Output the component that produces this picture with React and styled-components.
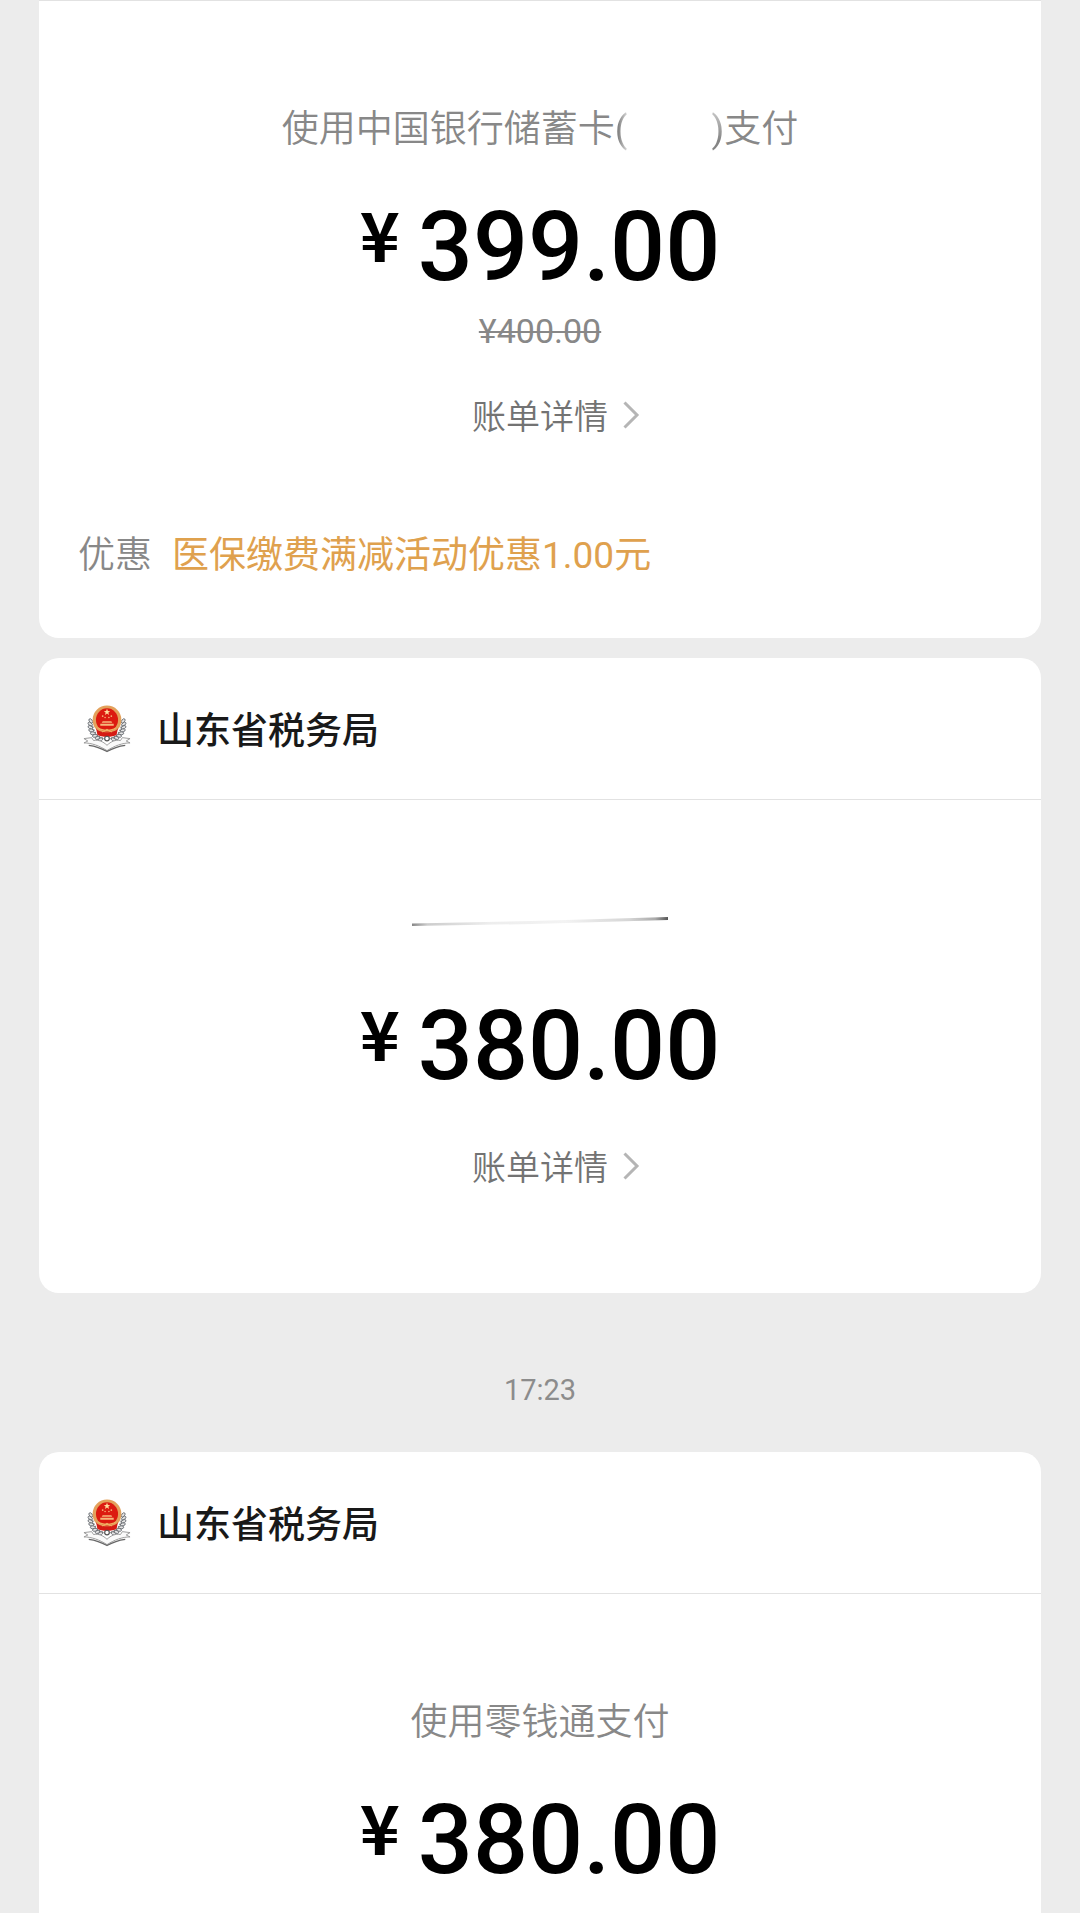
import React from "react";
import styled, { createGlobalStyle } from "styled-components";

const GRAINS = [0, 1, 2, 3, 4, 5, 6, 7];

function Emblem() {
  return (
    <svg width="48" height="48" viewBox="0 0 50 50" aria-hidden="true">
      {/* wheat ears */}
      {GRAINS.map((i) => {
        const deg = i * 12 - 16;
        const angle = (deg * Math.PI) / 180;
        const x = 17.5 * Math.cos(angle);
        const y = 21 + 16 * Math.sin(angle);
        return (
          <g key={i} fill="#e4e4e4" stroke="#666a70" strokeWidth=".9">
            <ellipse cx={25 + x} cy={y} rx="2.6" ry="1.5" transform={`rotate(${deg - 35} ${25 + x} ${y})`} />
            <ellipse cx={25 - x} cy={y} rx="2.6" ry="1.5" transform={`rotate(${35 - deg} ${25 - x} ${y})`} />
          </g>
        );
      })}
      <path d="M10 22c2 9 8 13 15 14 7-1 13-5 15-14" fill="none" stroke="#777" strokeWidth="1.2" strokeDasharray="2 1.2" />
      {/* red shield and gold ring */}
      <circle cx="25" cy="15.5" r="15" fill="#e3a15c" />
      <ellipse cx="25" cy="15.5" rx="11.5" ry="12" fill="#dc1a10" />
      <path d="M13.5 24c3 6 20 6 23 0l-1.500 7c-4 3-16 3-20 0z" fill="#d51b14" />
      <path d="M25 4l.9 2.300 2.400.1-1.900 1.500.7 2.400-2.100-1.400-2.100 1.400.7-2.400-1.900-1.500 2.400-.1z" fill="#ffdc9c" />
      <g fill="#f5b77b">
        <circle cx="20.500" cy="11.500" r=".9" />
        <circle cx="29.500" cy="11.500" r=".9" />
        <circle cx="23" cy="13" r=".8" />
        <circle cx="27" cy="13" r=".8" />
        <path d="M20.500 17h9l1 1.500h-11zM18 19.500h14v2H18z" />
      </g>
      <path d="M16 24c4 3 14 3 18 0M20 28l5-2.500 5 2.500" fill="none" stroke="#efae62" strokeWidth="1.500" />
      <circle cx="25" cy="35" r="2.400" fill="#fff" stroke="#555" strokeWidth="1.200" />
      {/* open book */}
      <path d="M1 35l8-1 2 3c5-1 10 1 14 5 4-4 9-6 14-5l2-3 8 1-4 2.500 4 2c-8 0-16 3-24 8-8-5-16-8-24-8l4-2z" fill="#fafafa" stroke="#909090" strokeWidth=".9" />
      <path d="M6 42c8 1 13 3 19 6.500 6-3.500 11-5.500 19-6.500" fill="none" stroke="#666" strokeWidth="1.300" />
    </svg>
  );
}

function CardTitle({ children }) {
  return (
    <CardHeader>
      <Emblem />
      <h2>{children}</h2>
    </CardHeader>
  );
}

function Price({ value }) {
  return (
    <Amount>
      <span className="sign">¥</span>
      <span className="value">{value}</span>
    </Amount>
  );
}

function BillLink() {
  return (
    <Details href="#bill">
      账单详情
      <svg width="18" height="30" viewBox="0 0 18 30" aria-hidden="true">
        <path d="M2.500 2.500L15 15 2.500 27.500" fill="none" stroke="#b5b5b5" strokeWidth="3" />
      </svg>
    </Details>
  );
}

function App() {
  return (
    <Page>
      <GlobalStyle />
      <Card $cut>
        <CardBody>
          <Method>
            使用中国银行储蓄卡<Paren $to="right">(</Paren>
            <Hidden />
            <Paren $to="top">)</Paren>支付
          </Method>
          <Price value="399.00" />
          <Original>¥400.00</Original>
          <BillLink />
        </CardBody>
        <Discount>
          <dt>优惠</dt>
          <dd>医保缴费满减活动优惠1.00元</dd>
        </Discount>
      </Card>
      <Card>
        <CardTitle>山东省税务局</CardTitle>
        <CardBody>
          <Method>
            <svg width="256" height="30" viewBox="0 0 256 30" aria-hidden="true">
              <defs>
                <linearGradient id="erased">
                  <stop offset="0" stopColor="#888" />
                  <stop offset=".06" stopColor="#ccc" />
                  <stop offset=".3" stopColor="#ededed" />
                  <stop offset=".6" stopColor="#f3f3f3" />
                  <stop offset=".85" stopColor="#d5d5d5" />
                  <stop offset=".95" stopColor="#aaa" />
                  <stop offset="1" stopColor="#555" />
                </linearGradient>
              </defs>
              <path d="M0 9.500L120 7 256 3v3L120 10 0 12z" fill="url(#erased)" />
            </svg>
          </Method>
          <Price value="380.00" />
          <BillLink />
        </CardBody>
      </Card>
      <Time>17:23</Time>
      <Card>
        <CardTitle>山东省税务局</CardTitle>
        <CardBody>
          <Method>使用零钱通支付</Method>
          <Price value="380.00" />
        </CardBody>
      </Card>
    </Page>
  );
}

const GlobalStyle = createGlobalStyle`
  * {
    box-sizing: border-box;
    margin: 0;
    padding: 0;
  }
  body {
    background: #ececec;
    font-family: Roboto, "Noto Sans CJK SC", sans-serif;
  }
`;

const Page = styled.main`
  height: 100vh;
  overflow: hidden;
  padding: 0 39px;
  background: #ececec;
`;

const Card = styled.section`
  background: #fff;
  border-radius: ${({ $cut }) => ($cut ? "0 0 20px 20px" : "20px")};
  & + & {
    margin-top: 20px;
  }
`;

const CardHeader = styled.header`
  display: flex;
  align-items: center;
  gap: 26px;
  height: 141px;
  padding: 0 44px;
  h2 {
    padding-top: 6px;
    color: #191919;
    font-size: 37px;
    font-weight: 500;
    line-height: 52px;
  }
`;

const CardBody = styled.div`
  display: flex;
  flex-direction: column;
  align-items: center;
  padding: 103px 40px 101px;
  border-top: 1px solid #e2e2e2;
`;

const Method = styled.p`
  display: flex;
  align-items: center;
  height: 52px;
  color: #888;
  font-size: 37px;
  font-weight: 350;
  line-height: 52px;
`;

const Paren = styled.span`
  background: linear-gradient(to ${({ $to }) => $to}, #858585 30%, #ccc 90%);
  background-clip: text;
  color: transparent;
  font-weight: 400;
`;

const Hidden = styled.span`
  width: 84px;
`;

const Amount = styled.p`
  display: flex;
  align-items: flex-start;
  gap: 18px;
  height: 120px;
  margin-top: 31px;
  color: #000;
  .sign {
    font-family: "Noto Sans CJK SC", sans-serif;
    font-size: 68px;
    font-weight: 700;
    line-height: 92px;
  }
  .value {
    font-size: 97px;
    font-weight: 500;
    line-height: 120px;
  }
`;

const Original = styled.del`
  color: #888;
  font-size: 34px;
  line-height: 48px;
  text-decoration-thickness: 2px;
`;

const Details = styled.a`
  display: flex;
  align-items: center;
  gap: 14px;
  margin-top: 38px;
  padding-left: 32px;
  color: #737373;
  font-size: 34px;
  font-weight: 350;
  line-height: 48px;
  text-decoration: none;
  svg {
    margin-bottom: 4px;
  }
`;

const Discount = styled.dl`
  display: flex;
  gap: 20px;
  margin-top: -12px;
  padding: 0 39px 56px;
  font-size: 37px;
  line-height: 52px;
  dt {
    color: #888;
    font-weight: 350;
  }
  dd {
    color: #dfa14e;
  }
`;

const Time = styled.p`
  margin: 77px 0 42px;
  color: #8c8c8c;
  font-size: 29px;
  line-height: 40px;
  text-align: center;
`;

export default App;
